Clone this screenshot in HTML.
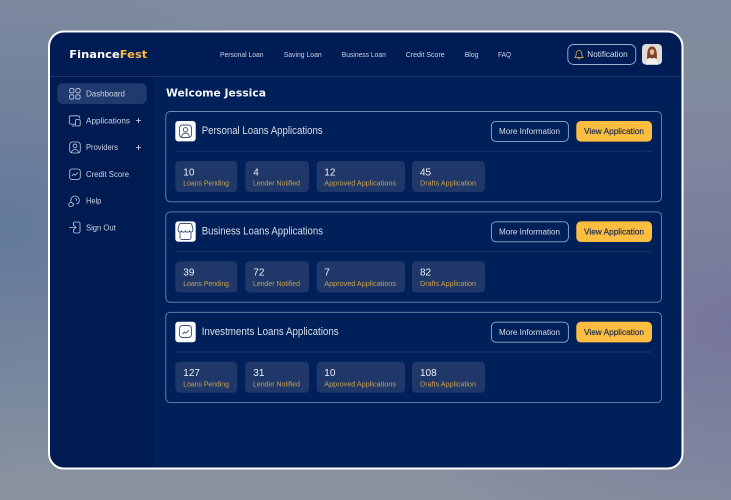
<!DOCTYPE html>
<html><head><meta charset="utf-8"><style>
html,body{margin:0;padding:0;width:731px;height:500px;overflow:hidden;background:#7f8a9f}
svg{display:block;filter:blur(.3px)}
text{font-family:"Liberation Sans",sans-serif}
.nav{font-size:7.5px;fill:#ccd3e2}
.side{font-size:8.6px;fill:#ccd3e2}
.wide{font-family:"DejaVu Sans","Liberation Sans",sans-serif;font-weight:700}
.title{font-size:10.6px;fill:#d8deea}
.num{font-size:10px;fill:#eef0f6}
.lab{font-size:7.5px;fill:#c9a04c}
.btn{font-size:8.6px;fill:#d8deea}
.btn2{font-size:8.6px;fill:#1a2a50;stroke:#1a2a50;stroke-width:.18}
.ic{fill:none;stroke:#bcc6da;stroke-width:.85}
.ti{fill:none;stroke:#3d5079;stroke-width:.9}
</style></head><body>
<svg width="731" height="500" viewBox="0 0 731 500" xmlns="http://www.w3.org/2000/svg">
<defs>
<radialGradient id="a" cx="0" cy=".45" r=".5"><stop offset="0" stop-color="#62789b"/><stop offset="1" stop-color="#62789b" stop-opacity="0"/></radialGradient>
<radialGradient id="b" cx="1" cy=".65" r=".5"><stop offset="0" stop-color="#76769c"/><stop offset="1" stop-color="#76769c" stop-opacity="0"/></radialGradient>
<linearGradient id="c" x1="0" y1="0" x2="0" y2="1"><stop offset="0" stop-color="#7f8a9e"/><stop offset="1" stop-color="#88929f"/></linearGradient>
<clipPath id="f"><rect x="49" y="31.500" width="633.500" height="437" rx="15"/></clipPath>
<clipPath id="av"><rect x="642" y="44" width="20" height="20.700" rx="4"/></clipPath>
<g id="card">
<rect x="165.800" y="111.500" width="495.700" height="90.300" rx="4.500" fill="#002059" stroke="#7386ad" stroke-width=".9"/>
<rect x="175.300" y="121" width="20.400" height="20.400" rx="3" fill="#fff"/>
<line x1="175.500" y1="151.200" x2="652" y2="151.200" stroke="#1a3569" stroke-width="1"/>
<rect x="491.400" y="121.400" width="77" height="20" rx="4.500" fill="none" stroke="#99a8c6" stroke-width=".9"/>
<text class="btn" x="499" y="134" textLength="61" lengthAdjust="spacingAndGlyphs">More Information</text>
<rect x="576.300" y="121" width="75.700" height="20.600" rx="4.500" fill="#fdbd40"/>
<text class="btn2" x="584" y="134" textLength="60" lengthAdjust="spacingAndGlyphs">View Application</text>
<rect x="175.300" y="161" width="62" height="31" rx="4" fill="#1f3869"/>
<rect x="245.300" y="161" width="63.700" height="31" rx="4" fill="#1f3869"/>
<rect x="316.700" y="161" width="88.300" height="31" rx="4" fill="#1f3869"/>
<rect x="412" y="161" width="73" height="31" rx="4" fill="#1f3869"/>
<text class="lab" x="183.300" y="185.500" textLength="45.700" lengthAdjust="spacingAndGlyphs">Loans Pending</text>
<text class="lab" x="253" y="185.500" textLength="47" lengthAdjust="spacingAndGlyphs">Lender Notified</text>
<text class="lab" x="324.300" y="185.500" textLength="71.700" lengthAdjust="spacingAndGlyphs">Approved Applications</text>
<text class="lab" x="420" y="185.500" textLength="56" lengthAdjust="spacingAndGlyphs">Drafts Application</text>
</g>
</defs>
<rect width="731" height="500" fill="url(#c)"/>
<rect width="731" height="500" fill="url(#a)"/>
<rect width="731" height="500" fill="url(#b)"/>
<g clip-path="url(#f)">
<rect x="49" y="31.500" width="634" height="437" fill="#002059"/>
<rect x="49" y="76" width="105" height="393" fill="#001b52"/>
<rect x="49" y="31.500" width="634" height="45" fill="#001c55"/>
<line x1="49" y1="76.400" x2="683" y2="76.400" stroke="#1d386d" stroke-width=".9"/>
</g>
<rect x="49" y="31.500" width="633.500" height="437" rx="15" fill="none" stroke="#fff" stroke-width="2"/>

<text class="wide" font-size="11" x="69.300" y="58" fill="#fff" textLength="78" lengthAdjust="spacingAndGlyphs">Finance<tspan fill="#fdbd40">Fest</tspan></text>
<text class="nav" x="220" y="57" textLength="43.500" lengthAdjust="spacingAndGlyphs">Personal Loan</text>
<text class="nav" x="283.700" y="57" textLength="38" lengthAdjust="spacingAndGlyphs">Saving Loan</text>
<text class="nav" x="341.800" y="57" textLength="44" lengthAdjust="spacingAndGlyphs">Business Loan</text>
<text class="nav" x="405.700" y="57" textLength="39" lengthAdjust="spacingAndGlyphs">Credit Score</text>
<text class="nav" x="464.700" y="57" textLength="13.800" lengthAdjust="spacingAndGlyphs">Blog</text>
<text class="nav" x="498" y="57" textLength="13" lengthAdjust="spacingAndGlyphs">FAQ</text>

<rect x="567.800" y="44.500" width="68" height="20" rx="6" fill="none" stroke="#a3b0cb" stroke-width=".9"/>
<path d="M575 57.500c1-1 1.200-2 1.200-3.600 0-2 1.200-3.400 2.800-3.400s2.800 1.400 2.800 3.400c0 1.600.2 2.600 1.200 3.600zM577.800 58.200c.3 1 2.100 1 2.400 0" fill="none" stroke="#c99a3c" stroke-width=".9"/>
<text x="587.300" y="57.200" font-size="8.600" fill="#d8deea" textLength="40.400" lengthAdjust="spacingAndGlyphs">Notification</text>

<g clip-path="url(#av)">
<rect x="642" y="44" width="20" height="20.700" fill="#dfdcd8"/>
<path d="M647.800 61c-.8-3-.8-5-.5-8 .3-3.500 1.700-6.500 4.700-6.500s4.400 3 4.700 6.500c.3 3 .3 5-.5 8z" fill="#7d4127"/>
<ellipse cx="652" cy="52" rx="2.300" ry="3" fill="#e3b39a"/>
<path d="M646 65c0-4 1.500-6.500 3.800-7.300l2.200.8 2.200-.8c2.300.8 3.800 3.300 3.800 7.300z" fill="#f3f1ed"/>
</g>

<rect x="57.300" y="83.300" width="89.400" height="20.700" rx="5" fill="#1f3a6e"/>
<g class="ic">
<rect x="69.600" y="88.600" width="4.300" height="4.300" rx="1.500"/><rect x="75.800" y="88.600" width="4.300" height="4.300" rx="1.500"/>
<rect x="69.600" y="94.800" width="4.300" height="4.300" rx="1.500"/><rect x="75.800" y="94.800" width="4.300" height="4.300" rx="1.500"/>
<path d="M75 124.200h-4.200a1.500 1.500 0 0 1-1.500-1.500v-5.400a1.500 1.500 0 0 1 1.500-1.500h7.400a1.500 1.500 0 0 1 1.500 1.500v1M72 126h3"/>
<rect x="75.500" y="119.500" width="4.700" height="6.500" rx="1.200"/>
<rect x="69.700" y="142" width="10.600" height="11" rx="2.800"/><circle cx="75" cy="146" r="1.900"/><path d="M71.500 152.500c.4-2 1.800-3 3.500-3s3.100 1 3.500 3"/>
<rect x="69.700" y="169" width="10.600" height="10.600" rx="2.500"/><path d="M72 175.800l1.800-1.800 1.500 1.200 2.600-2.700"/>
<path d="M70.800 201.500c0-3.800 1.900-5.500 4.300-5.500s4.200 1.800 4.200 4.500c0 2.300-1.600 3.200-3 3.500M75 198.500c1.600 0 2.200 1.400 1.500 2.500M69.500 203a2 2 0 0 0 2.500 3.200l2-1.700-2.800-2.500z"/>
<path d="M73.500 226v-2.500a1.500 1.500 0 0 1 1.500-1.500h3.500a1.500 1.500 0 0 1 1.500 1.500v8a1.500 1.500 0 0 1-1.500 1.500H75a1.500 1.500 0 0 1-1.500-1.500V229M69 227.500h7M74 225.500l2 2-2 2"/>
</g>
<text class="side" x="86" y="96.300" textLength="39" lengthAdjust="spacingAndGlyphs">Dashboard</text>
<text class="side" x="86" y="123.300" textLength="44" lengthAdjust="spacingAndGlyphs">Applications</text>
<text class="side" x="86" y="150" textLength="32" lengthAdjust="spacingAndGlyphs">Providers</text>
<text class="side" x="86" y="177" textLength="43" lengthAdjust="spacingAndGlyphs">Credit Score</text>
<text class="side" x="86" y="203.700" textLength="15.300" lengthAdjust="spacingAndGlyphs">Help</text>
<text class="side" x="86" y="230.500" textLength="29.700" lengthAdjust="spacingAndGlyphs">Sign Out</text>
<path d="M136 120.500h5M138.500 118v5M136 147.500h5M138.500 145v5" stroke="#d5dbe8" stroke-width=".8" fill="none"/>

<text class="wide" font-size="11" x="166" y="96.300" fill="#f4f6fa" textLength="100" lengthAdjust="spacingAndGlyphs">Welcome Jessica</text>

<use href="#card"/>
<rect x="179.500" y="125" width="12" height="12.500" rx="3" class="ti"/><circle cx="185.500" cy="129.800" r="2.200" class="ti"/><path d="M181.500 137c.4-2.600 2-3.800 4-3.800s3.600 1.200 4 3.800" class="ti"/>
<text class="title" x="201.700" y="134" textLength="121" lengthAdjust="spacingAndGlyphs">Personal Loans Applications</text>
<text class="num" x="183.300" y="175.300">10</text><text class="num" x="253.300" y="175.300">4</text><text class="num" x="324.300" y="175.300">12</text><text class="num" x="420" y="175.300">45</text>

<use href="#card" y="100.400"/>
<path d="M179 225.500a2 2 0 0 1 2-2h9a2 2 0 0 1 2 2l1 4c0 3-3 3-3.500 1.500-.5 1.500-3.500 1.500-4 0-.5 1.500-3.500 1.500-4 0-.5 1.500-3.500 1.500-3.500-1.500zM180 232.500v5a2 2 0 0 0 2 2h7a2 2 0 0 0 2-2v-5" class="ti" stroke-width="1.100"/>
<text class="title" x="201.700" y="234.500" textLength="121.300" lengthAdjust="spacingAndGlyphs">Business Loans Applications</text>
<text class="num" x="183.300" y="275.700">39</text><text class="num" x="253.300" y="275.700">72</text><text class="num" x="324.300" y="275.700">7</text><text class="num" x="420" y="275.700">82</text>

<use href="#card" y="200.800"/>
<rect x="179.500" y="325.500" width="12" height="12" rx="3" class="ti"/><path d="M182.500 334l2-2 1.500 1.200 2.800-3" class="ti" stroke-width="1.100"/>
<text class="title" x="201.700" y="335" textLength="137" lengthAdjust="spacingAndGlyphs">Investments Loans Applications</text>
<text class="num" x="183.300" y="376.100">127</text><text class="num" x="253.300" y="376.100">31</text><text class="num" x="324.300" y="376.100">10</text><text class="num" x="420" y="376.100">108</text>
</svg>
</body></html>
